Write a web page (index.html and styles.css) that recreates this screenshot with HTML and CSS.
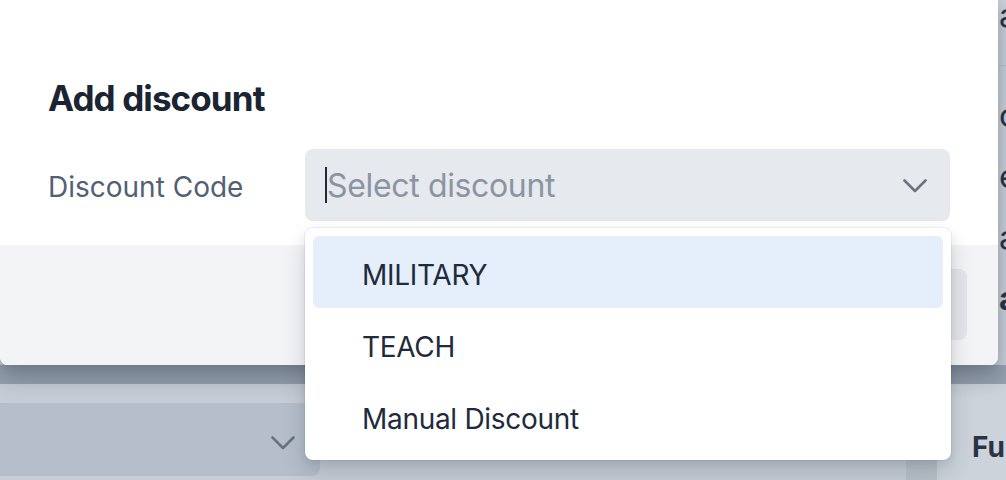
FILE: index.html
```html
<!DOCTYPE html>
<html lang="en">
<head>
<meta charset="utf-8">
<title>Add discount</title>
<link rel="stylesheet" href="styles.css">
</head>
<body>
<div class="page">
  <div class="page-top">
    <div class="page-main"></div>
    <div class="page-side">
      <div class="side-row first">amount</div>
      <div class="side-divider"></div>
      <div class="side-rows">
        <div class="side-row">customer</div>
        <div class="side-row">email</div>
        <div class="side-row">address</div>
        <div class="side-row bold">amount</div>
      </div>
    </div>
  </div>
  <div class="page-band"></div>
  <div class="page-bottom">
    <div class="pb-left">
      <div class="bg-select">
        <svg class="chev" width="24" height="14" viewBox="0 0 24 14"><path d="M1.5 1.5 L12 12 L22.5 1.5" fill="none" stroke="currentColor" stroke-width="2.6" stroke-linecap="round" stroke-linejoin="round"/></svg>
      </div>
    </div>
    <div class="pb-gutter"></div>
    <div class="pb-right"><div class="pb-title">Fulfillment</div></div>
  </div>
</div>

<div class="overlay"></div>

<div class="modal">
  <div class="modal-body">
    <h2 class="modal-title">Add discount</h2>
    <div class="form-row">
      <label class="form-label">Discount Code</label>
      <div class="select-wrap">
        <div class="select">
          <span class="caret"></span><span class="placeholder">Select discount</span>
          <svg class="select-chev" width="24" height="14" viewBox="0 0 24 14"><path d="M1.5 1.5 L12 12 L22.5 1.5" fill="none" stroke="currentColor" stroke-width="2.6" stroke-linecap="round" stroke-linejoin="round"/></svg>
        </div>
        <ul class="menu">
          <li class="option active">MILITARY</li>
          <li class="option">TEACH</li>
          <li class="option">Manual Discount</li>
        </ul>
      </div>
    </div>
  </div>
  <div class="modal-footer">
    <button class="btn">Apply</button>
  </div>
</div>
</body>
</html>
```

FILE: styles.css
```css
* { box-sizing: border-box; }
html, body { margin: 0; padding: 0; }
body {
  width: 1006px;
  height: 480px;
  overflow: hidden;
  font-family: Inter, "Noto Sans", "Liberation Sans", sans-serif;
  position: relative;
}

/* background page */
.page {
  width: 1006px;
  height: 480px;
  display: flex;
  flex-direction: column;
  background: #ffffff;
}
.page-top {
  height: 365px;
  display: flex;
  background: #eef3f6;
}
.page-main { flex: 0 0 999px; }
.page-side {
  flex: 1;
  overflow: hidden;
  white-space: nowrap;
  font-size: 33px;
  color: #111827;
}
.side-row {
  height: 61px;
  line-height: 61px;
}
.side-row.first {
  height: 30px;
  line-height: 30px;
}
.side-row.bold { font-weight: 700; }
.side-divider {
  margin-top: 35px;
  height: 1px;
  background: #d8dde3;
}
.side-rows { padding-top: 19px; }

.page-band {
  height: 19px;
  background: #abb4bd;
}
.page-bottom {
  flex: 1;
  display: flex;
}
.pb-left {
  flex: 0 0 906px;
  background: #f2f4f7;
  padding-top: 19px;
}
.bg-select {
  width: 320px;
  height: 73px;
  background: #d9dfe4;
  border-radius: 0 8px 8px 0;
  display: flex;
  align-items: center;
  justify-content: flex-end;
  padding-right: 25px;
  color: #6b7280;
}
.chev { display: block; margin-top: 6px; }
.pb-gutter {
  flex: 0 0 31px;
  background: #dee2e5;
}
.pb-right {
  flex: 1;
  background: #fafcfc;
  padding: 46px 0 0 35px;
  overflow: hidden;
  white-space: nowrap;
}
.pb-title {
  font-size: 28px;
  line-height: 34px;
  font-weight: 700;
  color: #111827;
}

.overlay {
  position: absolute;
  inset: 0;
  background: rgba(100, 116, 139, 0.3);
}

/* modal */
.modal {
  position: absolute;
  left: 0;
  top: 0;
  width: 998px;
  height: 365px;
  background: #ffffff;
  border-radius: 0 0 8px 8px;
  box-shadow: 0 14px 22px rgba(15, 23, 42, 0.22), 0 4px 8px rgba(15, 23, 42, 0.08);
  display: flex;
  flex-direction: column;
}
.modal-body {
  padding: 76px 48px 24px 48px;
}
.modal-title {
  margin: 0 0 29px 0;
  font-size: 35px;
  line-height: 44px;
  font-weight: 700;
  color: #1a2433;
  letter-spacing: -0.9px;
}
.form-row {
  display: flex;
  align-items: center;
  height: 72px;
}
.form-label {
  flex: 0 0 257px;
  font-size: 28px;
  color: #526074;
  padding-top: 3px;
}
.select-wrap {
  position: relative;
  flex: 1;
}
.select {
  height: 72px;
  background: #e6e9ee;
  border-radius: 8px;
  display: flex;
  align-items: center;
  padding: 0 23px 0 20px;
}
.caret {
  width: 2px;
  height: 36px;
  background: #1f2937;
}
.placeholder {
  flex: 1;
  font-size: 32px;
  color: #8b95a1;
  letter-spacing: -0.35px;
}
.select-chev { display: block; color: #6b7280; margin-top: 1px; }

.menu {
  position: absolute;
  left: 0;
  top: calc(100% + 7px);
  width: 646px;
  margin: 0;
  padding: 8px;
  list-style: none;
  background: #ffffff;
  border-radius: 8px;
  box-shadow: 0 0 0 1px rgba(15, 23, 42, 0.05), 0 12px 24px rgba(15, 23, 42, 0.16), 0 4px 8px rgba(15, 23, 42, 0.06);
}
.option {
  height: 72px;
  display: flex;
  align-items: center;
  padding: 5px 0 0 49px;
  font-size: 28px;
  color: #1e2b3c;
  border-radius: 6px;
  letter-spacing: -0.3px;
}
.option.active { background: #e5effb; }

.modal-footer {
  flex: 1;
  background: #f3f4f6;
  border-radius: 0 0 8px 8px;
  display: flex;
  justify-content: flex-end;
  padding: 24px 31px 25px 48px;
}
.btn {
  width: 200px;
  height: 71px;
  border: none;
  border-radius: 8px;
  background: #e3e6ea;
  font-family: inherit;
  font-size: 28px;
  color: #1f2937;
}
```
